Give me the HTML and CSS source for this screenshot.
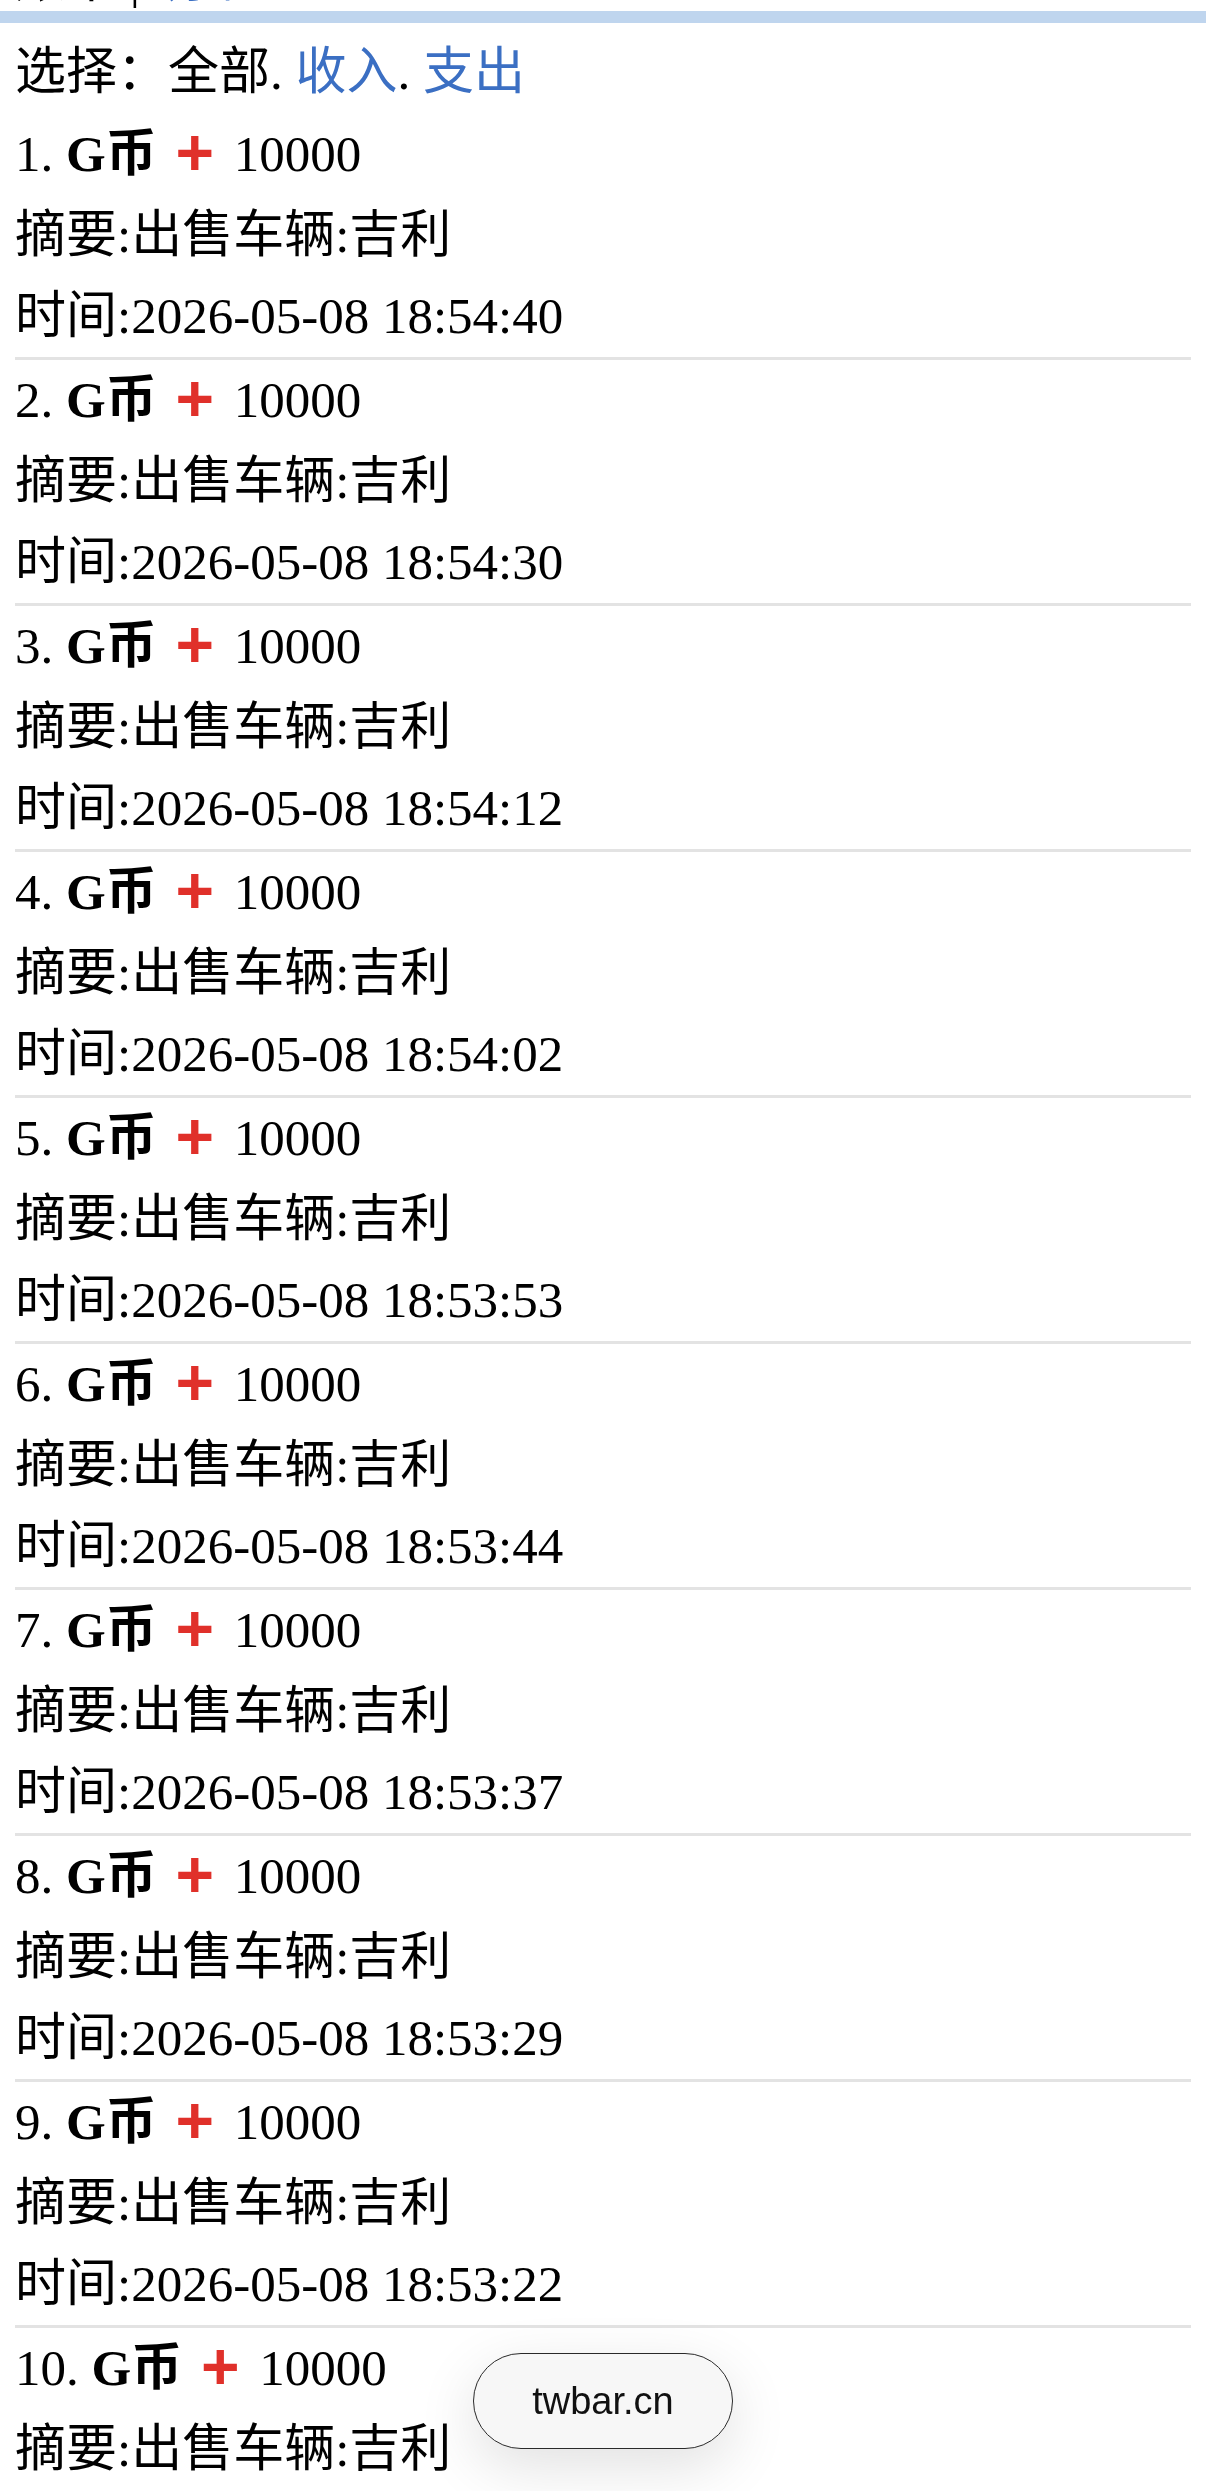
FILE: index.html
```html
<!DOCTYPE html>
<html lang="zh-CN">
<head>
  <meta charset="UTF-8" />
  <title>G币明细</title>
  <meta name="viewport" content="width=device-width, initial-scale=1.0" />
  <link rel="stylesheet" href="styles.css">
</head>
<body>

  <!-- top tabs, scrolled mostly out of view -->
  <div class="tabs">
    <div class="tabs-line">账单 | <a href="#">明细</a></div>
  </div>
  <div class="tab-bar"></div>

  <div class="page">
    <div class="filter">选择：全部. <a href="#">收入</a>. <a href="#">支出</a></div>

    <div class="record">
      <div>1. <b>G币</b> <span class="plus">+</span> 10000</div>
      <div>摘要:出售车辆:吉利</div>
      <div>时间:2026-05-08 18:54:40</div>
    </div>
    <div class="record">
      <div>2. <b>G币</b> <span class="plus">+</span> 10000</div>
      <div>摘要:出售车辆:吉利</div>
      <div>时间:2026-05-08 18:54:30</div>
    </div>
    <div class="record">
      <div>3. <b>G币</b> <span class="plus">+</span> 10000</div>
      <div>摘要:出售车辆:吉利</div>
      <div>时间:2026-05-08 18:54:12</div>
    </div>
    <div class="record">
      <div>4. <b>G币</b> <span class="plus">+</span> 10000</div>
      <div>摘要:出售车辆:吉利</div>
      <div>时间:2026-05-08 18:54:02</div>
    </div>
    <div class="record">
      <div>5. <b>G币</b> <span class="plus">+</span> 10000</div>
      <div>摘要:出售车辆:吉利</div>
      <div>时间:2026-05-08 18:53:53</div>
    </div>
    <div class="record">
      <div>6. <b>G币</b> <span class="plus">+</span> 10000</div>
      <div>摘要:出售车辆:吉利</div>
      <div>时间:2026-05-08 18:53:44</div>
    </div>
    <div class="record">
      <div>7. <b>G币</b> <span class="plus">+</span> 10000</div>
      <div>摘要:出售车辆:吉利</div>
      <div>时间:2026-05-08 18:53:37</div>
    </div>
    <div class="record">
      <div>8. <b>G币</b> <span class="plus">+</span> 10000</div>
      <div>摘要:出售车辆:吉利</div>
      <div>时间:2026-05-08 18:53:29</div>
    </div>
    <div class="record">
      <div>9. <b>G币</b> <span class="plus">+</span> 10000</div>
      <div>摘要:出售车辆:吉利</div>
      <div>时间:2026-05-08 18:53:22</div>
    </div>
    <div class="record last">
      <div>10. <b>G币</b> <span class="plus">+</span> 10000</div>
      <div>摘要:出售车辆:吉利</div>
    </div>
  </div>

  <div class="url-pill">twbar.cn</div>

</body>
</html>
```

FILE: styles.css
```css
body {
  margin: 0;
  background: #fff;
  color: #000;
  font-family: "Liberation Serif", "Noto Sans CJK SC", serif;
  font-size: 51px;
  line-height: 81px;
}

a {
  color: #3b6fc3;
  text-decoration: none;
}

.tabs {
  height: 11px;
  overflow: hidden;
  padding: 0 15px;
}

.tabs-line {
  margin-top: -60px;
  white-space: nowrap;
}

.tab-bar {
  height: 12px;
  background-color: #bfd5ee;
}

.page {
  padding: 9px 15px 0;
}

.filter {
  margin-bottom: 1px;
}

.record {
  border-bottom: 3px solid #e3e3e3;
}

.record > div {
  height: 81px;
}

.record.last {
  border-bottom: none;
}

.record b {
  font-weight: bold;
}

.plus {
  color: #e0302a;
  font-family: "Liberation Sans", sans-serif;
  font-weight: bold;
  font-size: 66px;
  line-height: 0;
  vertical-align: -4px;
  padding: 0 7px 0 6px;
}

.url-pill {
  position: fixed;
  left: 50%;
  bottom: 42px;
  transform: translateX(-50%);
  width: 260px;
  height: 96px;
  box-sizing: border-box;
  border: 1.5px solid #2a2a2a;
  border-radius: 48px;
  background-color: #f7f7f7;
  box-shadow: 0 18px 60px rgba(0,0,0,0.12);
  display: flex;
  align-items: center;
  justify-content: center;
  font-family: "Liberation Sans", "Noto Sans", sans-serif;
  font-size: 38px;
  line-height: 1;
  color: #111;
}
```
